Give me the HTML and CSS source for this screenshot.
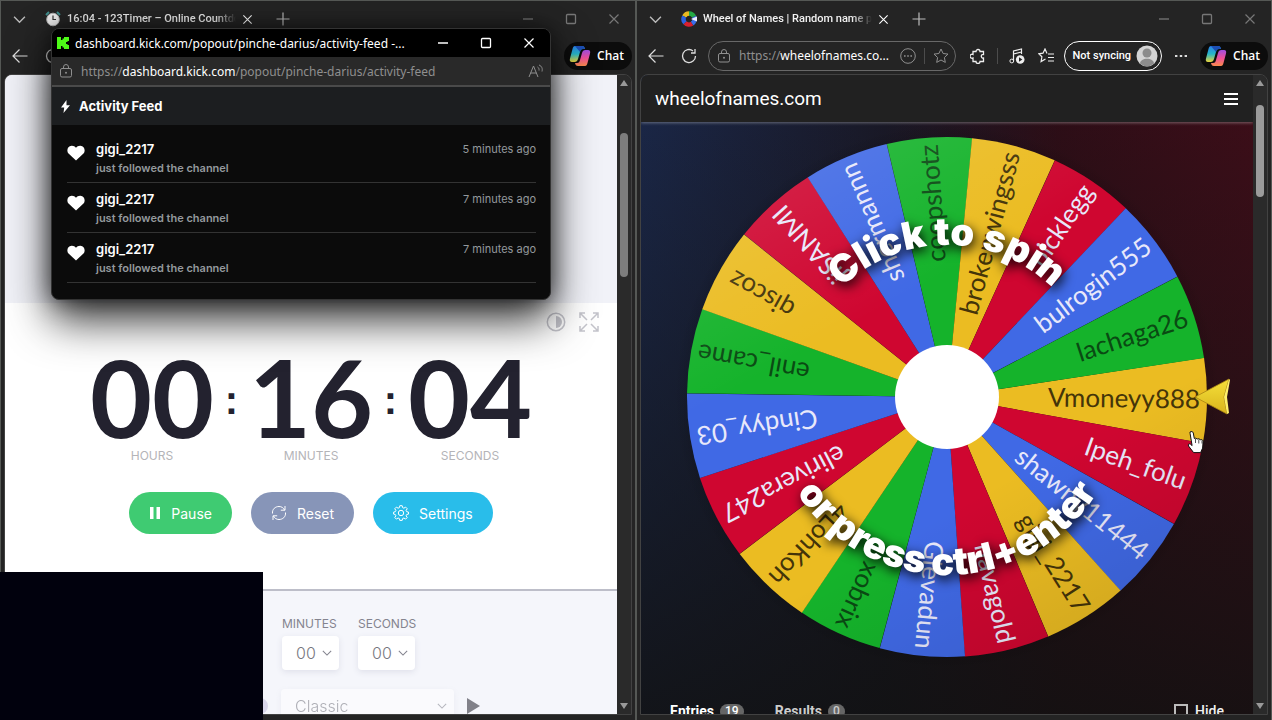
FILE: index.html
```html
<!DOCTYPE html>
<html lang="en">
<head>
<meta charset="utf-8">
<title>Desktop</title>
<link rel="stylesheet" href="styles.css">
</head>
<body>
<svg class="defs" width="0" height="0" aria-hidden="true">
  <defs>
    <linearGradient id="cpA" x1="0" y1="0" x2="0" y2="1"><stop offset="0" stop-color="#2a7fe8"/><stop offset=".5" stop-color="#27b6c8"/><stop offset="1" stop-color="#e8d43a"/></linearGradient>
    <linearGradient id="cpB" x1="0" y1="0" x2="0" y2="1"><stop offset="0" stop-color="#a04de0"/><stop offset=".5" stop-color="#ee4f9a"/><stop offset="1" stop-color="#f98a4b"/></linearGradient>
    <symbol id="copilot" viewBox="0 0 22 22"><path d="M6 1h7c2 0 2.500 1 3 3h-2c-2 0-2.500 1-3 3l-2 7c-.6 2-1.500 3-3.500 3H3c-2 0-2.600-1.500-2-3.500L3.500 4C4 2 4.600 1 6 1z" fill="url(#cpA)"/><path d="M16 21H9c-2 0-2.500-1-3-3h2c2 0 2.500-1 3-3l2-7c.6-2 1.500-3 3.500-3H19c2 0 2.600 1.500 2 3.500L18.500 18c-.5 2-1.100 3-2.500 3z" fill="url(#cpB)"/><path d="M6 1h7c2 0 2.500 1 3 3h-2c-2 0-2.500 1-3 3z" fill="#1c4fb4"/></symbol>
    <symbol id="chev" viewBox="0 0 12 12"><path d="M1 3.500 6 8.500l5-5" fill="none" stroke="currentColor" stroke-width="1.300"/></symbol>
    <symbol id="x" viewBox="0 0 12 12"><path d="M1.500 1.500l9 9m0-9l-9 9" stroke="currentColor" stroke-width="1.200"/></symbol>
    <symbol id="min" viewBox="0 0 12 12"><path d="M1 6h10" stroke="currentColor" stroke-width="1.300"/></symbol>
    <symbol id="max" viewBox="0 0 12 12"><rect x="1.500" y="1.500" width="9" height="9" rx="1" fill="none" stroke="currentColor" stroke-width="1.300"/></symbol>
    <symbol id="plus" viewBox="0 0 14 14"><path d="M7 .5v13M.5 7h13" stroke="currentColor" stroke-width="1.200"/></symbol>
    <symbol id="back" viewBox="0 0 16 16"><path d="M15.500 8H1M7.500 1.500 1 8l6.500 6.500" fill="none" stroke="currentColor" stroke-width="1.200"/></symbol>
    <symbol id="reload" viewBox="0 0 16 16"><path d="M14.500 8A6.500 6.500 0 1 1 12 2.900M14 1v4h-4" fill="none" stroke="currentColor" stroke-width="1.300"/></symbol>
    <symbol id="lock" viewBox="0 0 14 14"><rect x="1.500" y="4.500" width="11" height="8.500" rx="1.500" fill="none" stroke="currentColor"/><path d="M4.500 4.500V3a2.500 2.500 0 0 1 5 0v1.500" fill="none" stroke="currentColor"/><circle cx="7" cy="8.700" r="1" fill="currentColor"/></symbol>
    <symbol id="heart" viewBox="0 0 18 16"><path d="M9 15.500 1.500 8.500C-.8 6 .4 1 4.600.700 6.600.600 8 1.400 9 2.800c1-1.400 2.400-2.200 4.400-2.100C17.600 1 18.800 6 16.500 8.500z" fill="#fff"/></symbol>
    <symbol id="up" viewBox="0 0 8 6"><path d="M4 0 8 6H0z" fill="currentColor"/></symbol>
    <symbol id="down" viewBox="0 0 8 6"><path d="M4 6 8 0H0z" fill="currentColor"/></symbol>
  </defs>
</svg>

<main class="desktop">
  <section class="window" aria-label="123Timer">
    <header class="tabs">
      <button class="icon tabmenu" aria-label="Tab menu"><svg width="13" height="13"><use href="#chev"/></svg></button>
      <div class="tab">
        <svg width="16" height="16" viewBox="0 0 16 16"><path d="M1 4l3-3M15 4l-3-3" stroke="#3f8d8c" stroke-width="2"/><circle cx="8" cy="8.500" r="6.300" fill="#eee" stroke="#b5b5b5"/><path d="M8 4.500v4h3" fill="none" stroke="#333" stroke-width="1.200"/></svg>
        <span class="tabtitle">16:04 - 123Timer – Online Countdown</span>
        <button class="icon bright" aria-label="Close tab"><svg width="11" height="11"><use href="#x"/></svg></button>
      </div>
      <button class="icon" aria-label="New tab"><svg width="14" height="14"><use href="#plus"/></svg></button>
      <div class="controls">
        <button class="icon" aria-label="Minimize"><svg width="12" height="12"><use href="#min"/></svg></button>
        <button class="icon" aria-label="Maximize"><svg width="12" height="12"><use href="#max"/></svg></button>
        <button class="icon" aria-label="Close"><svg width="12" height="12"><use href="#x"/></svg></button>
      </div>
    </header>
    <div class="toolbar">
      <button class="icon" aria-label="Back"><svg width="16" height="16"><use href="#back"/></svg></button>
      <button class="icon" aria-label="Reload"><svg width="16" height="16"><use href="#reload"/></svg></button>
      <button class="chat"><svg width="22" height="22"><use href="#copilot"/></svg>Chat</button>
    </div>
    <div class="view">
      <div class="page timer">
        <div class="hero"></div>
        <div class="card">
          <div class="tools">
            <button class="icon" aria-label="Contrast"><svg width="20" height="20" viewBox="0 0 20 20"><circle cx="10" cy="10" r="8.700" fill="none" stroke="currentColor" stroke-width="1.500"/><path d="M10 4a6 6 0 0 1 0 12z" fill="currentColor"/></svg></button>
            <button class="icon" aria-label="Full screen"><svg width="20" height="20" viewBox="0 0 20 20" fill="none" stroke="currentColor" stroke-width="1.500"><path d="M1 6V1h5M14 1h5v5M19 14v5h-5M6 19H1v-5M1 1l7 7M19 1l-7 7M19 19l-7-7M1 19l7-7"/></svg></button>
          </div>
          <div class="clock">
            <div class="unit"><b>00</b><span>HOURS</span></div>
            <i>:</i>
            <div class="unit"><b>16</b><span>MINUTES</span></div>
            <i>:</i>
            <div class="unit"><b>04</b><span>SECONDS</span></div>
          </div>
          <div class="actions">
            <button class="pill pause"><svg width="12" height="12" viewBox="0 0 12 12"><path d="M1 0h3.500v12H1zM7.500 0H11v12H7.500z" fill="#fff"/></svg>Pause</button>
            <button class="pill reset"><svg width="16" height="16" viewBox="0 0 16 16" fill="none" stroke="#fff"><path d="M1.500 8.500C1 4 4.500 1.500 8 1.500c2.500 0 4.500 1.300 5.500 3.500M14 1v4.200h-4.200M14.500 7.500C15 12 11.500 14.500 8 14.500c-2.500 0-4.500-1.300-5.500-3.500M2 15v-4.200h4.200"/></svg>Reset</button>
            <button class="pill settings"><svg width="16" height="16" viewBox="0 0 16 16" fill="none" stroke="#fff"><circle cx="8" cy="8" r="2.700"/><path d="M6.800.700h2.400l.4 1.900 1.300.6 1.700-1.100 1.600 1.600-1.100 1.700.6 1.300 1.800.4v2l-1.800.4-.6 1.300 1.100 1.700-1.600 1.600-1.700-1.100-1.300.6-.4 1.800H6.800l-.4-1.800-1.300-.6-1.700 1.100-1.600-1.600 1.100-1.700-.6-1.300L.600 9.100v-2l1.700-.4.600-1.300-1.100-1.700 1.600-1.600 1.700 1.100 1.300-.6z"/></svg>Settings</button>
          </div>
        </div>
        <div class="options">
          <div class="fields">
            <label>MINUTES<span class="pick"><select><option>00</option></select><svg width="10" height="10"><use href="#chev"/></svg></span></label>
            <label>SECONDS<span class="pick"><select><option>00</option></select><svg width="10" height="10"><use href="#chev"/></svg></span></label>
          </div>
          <div class="sound">
            <span class="knob"></span>
            <span class="pick wide"><select aria-label="Sound"><option>Classic</option></select><svg width="10" height="10"><use href="#chev"/></svg></span>
            <button class="icon" aria-label="Play sound"><svg width="13" height="16" viewBox="0 0 13 16"><path d="M0 0v16l13-8z" fill="#818189"/></svg></button>
          </div>
        </div>
      </div>
      <div class="scroll mid"><svg width="8" height="6"><use href="#up"/></svg><span class="thumb"></span><svg class="end" width="8" height="6"><use href="#down"/></svg></div>
    </div>
  </section>

  <section class="window" aria-label="Wheel of Names">
    <header class="tabs">
      <button class="icon tabmenu" aria-label="Tab menu"><svg width="13" height="13"><use href="#chev"/></svg></button>
      <div class="tab">
        <svg width="16" height="16" viewBox="-8 -8 16 16" fill="none" stroke-width="4.500"><path d="M-4.800-2.500A5.500 5.500 0 0 1 0-5.500" stroke="#e8b923"/><path d="M0-5.500A5.500 5.500 0 0 1 5-2.300" stroke="#23a845"/><path d="M5-2.300A5.500 5.500 0 0 1 3 4.700" stroke="#3b6fe8"/><path d="M3 4.700A5.500 5.500 0 0 1-4 3.800" stroke="#d8202f"/><path d="M-4 3.800A5.500 5.500 0 0 1-4.800-2.500" stroke="#2b62e0"/><circle r="2.800" fill="#222" stroke="none"/><path d="M2 0l6-2.500v5z" fill="#eef" stroke="none"/></svg>
        <span class="tabtitle">Wheel of Names | Random name picker</span>
        <button class="icon bright" aria-label="Close tab"><svg width="11" height="11"><use href="#x"/></svg></button>
      </div>
      <button class="icon" aria-label="New tab"><svg width="14" height="14"><use href="#plus"/></svg></button>
      <div class="controls">
        <button class="icon" aria-label="Minimize"><svg width="12" height="12"><use href="#min"/></svg></button>
        <button class="icon" aria-label="Maximize"><svg width="12" height="12"><use href="#max"/></svg></button>
        <button class="icon" aria-label="Close"><svg width="12" height="12"><use href="#x"/></svg></button>
      </div>
    </header>
    <div class="toolbar">
      <button class="icon" aria-label="Back"><svg width="16" height="16"><use href="#back"/></svg></button>
      <button class="icon" aria-label="Reload"><svg width="16" height="16"><use href="#reload"/></svg></button>
      <div class="address">
        <svg width="14" height="14"><use href="#lock"/></svg>
        <span class="url">https://<em>wheelofnames.co...</em></span>
        <svg width="16" height="16" viewBox="0 0 16 16"><circle cx="8" cy="8" r="7.300" fill="none" stroke="currentColor"/><path d="M4 8h1.600M7.200 8h1.600M10.400 8H12" stroke="currentColor" stroke-width="1.600"/></svg>
        <span class="rule"></span>
        <svg width="16" height="16" viewBox="0 0 16 16"><path d="M8 1l2.100 4.500 4.900.6-3.600 3.400.9 4.900L8 12l-4.300 2.400.9-4.900L1 6.100l4.900-.6z" fill="none" stroke="currentColor"/></svg>
      </div>
      <div class="extras">
        <button class="icon" aria-label="Extensions"><svg width="16" height="16" viewBox="0 0 16 16"><path d="M3 3.500h3a2 2 0 1 1 4 0h3.500v3a1.800 1.800 0 1 0 0 3.500v3.500H10a2 2 0 0 1-4 0H3V10a2 2 0 1 1 0-3.500z" fill="none" stroke="currentColor" stroke-width="1.300"/></svg></button>
        <span class="rule"></span>
        <button class="icon" aria-label="Media"><svg width="16" height="16" viewBox="0 0 16 16"><path d="M4.500 13V3l8-2v5M4.500 6l8-2" fill="none" stroke="currentColor" stroke-width="1.200"/><circle cx="2.800" cy="13" r="1.900" fill="none" stroke="currentColor"/><circle cx="11.200" cy="11.500" r="4.300" fill="currentColor"/><path d="M10 9.300v4.400l3.400-2.200z" fill="#242424"/></svg></button>
        <button class="icon" aria-label="Favorites"><svg width="16" height="16" viewBox="0 0 16 16"><path d="M9 5.500 7 1 5 5.200l-4.200.6 3.100 3-.8 4.800L7.500 11M10 6h6M10 9.500h6M10 13h6" fill="none" stroke="currentColor" stroke-width="1.200"/></svg></button>
      </div>
      <button class="profile">Not syncing<svg width="22" height="22" viewBox="0 0 22 22"><circle cx="11" cy="11" r="10.500" fill="#d4d4d4"/><circle cx="11" cy="8" r="4.500" fill="#8c8c8c"/><path d="M4 18.500c0-6.500 14-6.500 14 0a10.500 10.500 0 0 1-14 0z" fill="#8c8c8c"/></svg></button>
      <button class="icon dots" aria-label="More"><svg width="12" height="4" viewBox="0 0 12 4"><path d="M0 2h2.400M4.800 2h2.400M9.600 2H12" stroke="currentColor" stroke-width="2"/></svg></button>
      <button class="chat"><svg width="22" height="22"><use href="#copilot"/></svg>Chat</button>
    </div>
    <div class="view">
      <div class="page names">
        <nav class="sitebar"><a href="#">wheelofnames.com</a><button class="icon" aria-label="Menu"><svg width="14" height="12" viewBox="0 0 14 12"><path d="M0 1h14M0 6h14M0 11h14" stroke="#fff" stroke-width="2"/></svg></button></nav>
        <svg class="wheel" viewBox="0 0 612 560" role="img" aria-label="Wheel with 19 names">
          <defs>
            <path id="s" d="M0 0 256.450-42.790A260 260 0 0 1 256.450 42.790z"/>
            <path id="arcTop" d="M-152 0A152 152 0 0 1 152 0"/>
            <path id="arcBottom" d="M-178 0A178 178 0 0 0 178 0"/>
            <radialGradient id="dark"><stop offset=".75" stop-color="#000" stop-opacity=".5"/><stop offset="1" stop-color="#000" stop-opacity="0"/></radialGradient>
            <linearGradient id="gloss" x1=".15" y1="0" x2=".7" y2="1"><stop offset="0" stop-color="#fff" stop-opacity=".13"/><stop offset=".35" stop-color="#fff" stop-opacity="0"/><stop offset=".7" stop-color="#000" stop-opacity="0"/><stop offset="1" stop-color="#000" stop-opacity=".1"/></linearGradient>
            <linearGradient id="gold" x1="0" y1="0" x2="0" y2="1"><stop offset="0" stop-color="#f5e03a"/><stop offset="1" stop-color="#d9b41c"/></linearGradient>
          </defs>
          <g transform="translate(306 275)">
            <circle r="272" fill="url(#dark)"/>
            <g class="slices">
              <g class="y" transform="rotate(.8)"><use href="#s"/><text x="253" y="8">Vmoneyy888</text></g>
              <g class="r" transform="rotate(19.700)"><use href="#s"/><text x="253" y="8">Ipeh_folu</text></g>
              <g class="b" transform="rotate(38.700)"><use href="#s"/><text x="253" y="8">shawny11444</text></g>
              <g class="y" transform="rotate(57.600)"><use href="#s"/><text x="253" y="8">gigi_2217</text></g>
              <g class="r" transform="rotate(76.600)"><use href="#s"/><text x="253" y="8">navagold</text></g>
              <g class="b" transform="rotate(95.500)"><use href="#s"/><text x="253" y="8">Glevadun</text></g>
              <g class="g" transform="rotate(114.500)"><use href="#s"/><text x="253" y="8">xobrix</text></g>
              <g class="y" transform="rotate(133.400)"><use href="#s"/><text x="253" y="8">4LohKoh</text></g>
              <g class="r" transform="rotate(152.400)"><use href="#s"/><text x="253" y="8">elirivera247</text></g>
              <g class="b" transform="rotate(171.300)"><use href="#s"/><text x="253" y="8">Cindyy_03</text></g>
              <g class="g" transform="rotate(190.300)"><use href="#s"/><text x="253" y="8">enil_came</text></g>
              <g class="y" transform="rotate(209.200)"><use href="#s"/><text x="247" y="8">qiscoz</text></g>
              <g class="r" transform="rotate(228.200)"><use href="#s"/><text x="253" y="8">jiSANMI</text></g>
              <g class="b" transform="rotate(247.100)"><use href="#s"/><text x="253" y="8">shermannn</text></g>
              <g class="g" transform="rotate(266.100)"><use href="#s"/><text x="253" y="8">coopshotz</text></g>
              <g class="y" transform="rotate(285)"><use href="#s"/><text x="253" y="8">brokenwingsss</text></g>
              <g class="r" transform="rotate(304)"><use href="#s"/><text x="253" y="8">picklegg</text></g>
              <g class="b" transform="rotate(322.900)"><use href="#s"/><text x="253" y="8">bulrogin555</text></g>
              <g class="g" transform="rotate(341.900)"><use href="#s"/><text x="253" y="8">lachaga26</text></g>
            </g>
            <circle r="260" fill="url(#gloss)"/>
            <circle r="52" fill="#fff"/>
            <text class="arc"><textPath href="#arcTop" startOffset="50%">Click to spin</textPath></text>
            <text class="arc"><textPath href="#arcBottom" startOffset="50%">or press ctrl+enter</textPath></text>
            <path d="M248 0 282-18 277 0 280 17z" fill="url(#gold)" stroke="#a98412" stroke-width=".8"/><path d="M282-18 277 0l3 17 2-1-2-16 3-17z" fill="#fff06a"/>
            <path d="M243 35c1.500-1 3-.3 3.300 1l1 5.500 1.300-.3 1.700.8 1.500-.3 1.500 1 1.500-.1c1 .5 1.500 1.200 1.300 2.500l-.5 6-2 4.500h-7l-5-6.500c-1-1.800.6-2.800 2-1.800l1.500 1.300-2-12z" fill="#fff" stroke="#111"/><path d="M248.500 42v4M251.800 42.500v4M255 43.500v3" stroke="#222" stroke-width=".8"/>
          </g>
        </svg>
        <div class="lists">
          <button class="list on">Entries <span>19</span></button>
          <button class="list">Results <span>0</span></button>
          <label class="hide"><input type="checkbox">Hide</label>
        </div>
      </div>
      <div class="scroll top"><svg width="8" height="6"><use href="#up"/></svg><span class="thumb"></span><svg class="end" width="8" height="6"><use href="#down"/></svg></div>
    </div>
  </section>

  <section class="popup" aria-label="Activity feed">
    <header class="poptitle">
      <svg width="12" height="12" viewBox="0 0 12 12"><path d="M0 0h4v3h1.500V1.500H7V0h5v4h-1.500v1H9v2h1.500v1H12v4H7v-1.500H5.500V9H4v3H0z" fill="#4dfb17"/></svg>
      <span>dashboard.kick.com/popout/pinche-darius/activity-feed -...</span>
      <button class="icon" aria-label="Minimize"><svg width="12" height="12"><use href="#min"/></svg></button>
      <button class="icon" aria-label="Maximize"><svg width="12" height="12"><use href="#max"/></svg></button>
      <button class="icon" aria-label="Close"><svg width="12" height="12"><use href="#x"/></svg></button>
    </header>
    <div class="popurl"><svg width="14" height="14"><use href="#lock"/></svg><span class="url">https://<em>dashboard.kick.com</em>/popout/pinche-darius/activity-feed</span><svg width="16" height="14" viewBox="0 0 16 14" fill="none" stroke="currentColor"><path d="M1 13 5.500 2 10 13M2.600 9h5.800M9.500 3c1.500.8 1.700 2.300 1.500 3.500M11 1c3 1.200 3.700 3.700 3 6.500"/></svg></div>
    <h1><svg width="9" height="13" viewBox="0 0 9 13"><path d="M5.500 0 0 7.500h3.200L2.500 13 9 5.200H5.500z" fill="#fff"/></svg>Activity Feed</h1>
    <ul class="feed">
      <li><svg width="18" height="16"><use href="#heart"/></svg><div><strong>gigi_2217</strong><p>just followed the channel</p></div><time>5 minutes ago</time></li>
      <li><svg width="18" height="16"><use href="#heart"/></svg><div><strong>gigi_2217</strong><p>just followed the channel</p></div><time>7 minutes ago</time></li>
      <li><svg width="18" height="16"><use href="#heart"/></svg><div><strong>gigi_2217</strong><p>just followed the channel</p></div><time>7 minutes ago</time></li>
    </ul>
  </section>
  <div class="facecam"></div>
</main>
</body>
</html>
```
FILE: styles.css
```css
* { box-sizing: border-box; }
body { margin: 0; background: #191a1a; font-family: "Noto Sans", "Open Sans", sans-serif; font-size: 12px; color: #f0f0f0; }
button { font: inherit; color: inherit; background: none; border: 0; padding: 0; }
svg { display: block; flex: none; }
.defs { position: absolute; }
.desktop { position: relative; height: 100vh; display: grid; grid-template-columns: 1fr 1fr; overflow: hidden; }
.window { display: flex; flex-direction: column; min-width: 0; min-height: 0; background: #242424; border: 1px solid #555855; border-width: 1px 1px 0; padding: 0 3px 5px; }
.icon { display: grid; place-items: center; flex: none; }
.bright { color: #fff; }

.tabs { display: flex; align-items: center; height: 36px; padding: 0 8px; color: #bbb; }
.tab { display: flex; align-items: center; gap: 6px; width: 208px; margin: 0 23px 0 18px; color: #f2f2f2; }
.tabmenu { width: 15px; }
.tabtitle { flex: 1; overflow: hidden; white-space: nowrap; font: 500 11px/20px Roboto, sans-serif; -webkit-mask-image: linear-gradient(to right, #000 88%, transparent); mask-image: linear-gradient(to right, #000 88%, transparent); }
.controls { display: flex; gap: 31px; margin-left: auto; padding-right: 4px; color: #777; }
.toolbar { display: flex; align-items: center; height: 37px; padding-left: 8px; gap: 17px; color: #ddd; }
.chat { display: flex; align-items: center; gap: 6px; height: 28px; padding: 0 8px 0 5px; margin: 0 0 0 auto; border-radius: 14px; background: #0c0c0c; color: #fff; font: 600 12px "Open Sans", sans-serif; }
.address { flex: 1; min-width: 0; display: flex; align-items: center; height: 30px; margin-left: -6px; padding: 0 6px 0 8px; gap: 8px; border: 1px solid #686868; border-radius: 15px; color: #909090; }
.url { flex: 1; overflow: hidden; white-space: nowrap; font-size: 12px; color: #8f8f8f; }
.url em { font-style: normal; color: #fff; }
.rule { width: 1px; height: 16px; background: #4c4c4c; }
.extras { display: flex; align-items: center; gap: 13px; }
.address + .extras { margin-left: -3px; }
.extras .icon { color: #eee; }
.extras .rule { margin: 0 -2px; }
.profile { display: flex; align-items: center; gap: 5px; height: 30px; padding: 0 3px 0 8px; margin: 0 -4px 0 -7px; border: 1px solid #fff; border-radius: 15px; color: #fff; font: 500 11px Roboto, sans-serif; white-space: nowrap; }
.dots { margin-right: -4px; }

.view { flex: 1; min-height: 0; display: flex; border: 1px solid #424242; border-radius: 8px 8px 0 0; overflow: hidden; }
.page { flex: 1; min-width: 0; display: flex; flex-direction: column; overflow: hidden; }
.scroll { width: 14px; display: flex; flex-direction: column; align-items: center; padding: 5px 0; color: #999; background: #2a2a2a; }
.scroll .end { margin-top: auto; }
.thumb { width: 8px; border-radius: 4px; background: #9b9b9b; }
.mid .thumb { height: 144px; margin-top: 47px; background: #7d7d7d; }
.top .thumb { height: 92px; margin-top: 19px; }

.timer { background: #f5f6fb; color: #84848f; font-family: Inter, sans-serif; }
.timer > * { flex: none; }
.hero { height: 228px; background: #f1f2f8; }
.card { height: 288px; background: #fff; border-bottom: 2px solid #bdbec9; padding-top: 9px; }
.tools { display: flex; justify-content: flex-end; gap: 13px; padding-right: 18px; color: #c4c4cb; }
.clock { display: flex; justify-content: center; margin-top: 20px; }
.unit { width: 125px; display: flex; flex-direction: column; align-items: center; }
.unit b { font: 700 107px/90px Lato, sans-serif; color: #23222f; }
.unit span { font-size: 12px; line-height: 16px; margin-top: 6px; color: #b4b4b8; }
.clock i { width: 34px; text-align: center; font: 700 40px/96px "Liberation Sans", Arial, sans-serif; color: #23222f; }
.actions { display: flex; justify-content: center; gap: 19px; margin-top: 28px; }
.pill { display: flex; align-items: center; gap: 10px; height: 42px; padding: 0 20px; border-radius: 21px; color: #fff; font-size: 14px; }
.pause { background: #3fcb72; }
.reset { background: #8795b8; }
.settings { background: #29bdea; }
.options { padding: 25px 0 0 277px; }
.fields { display: flex; gap: 19px; }
.fields label { width: 57px; font-size: 12px; line-height: 16px; }
.pick { display: flex; align-items: center; width: 57px; height: 34px; margin-top: 4px; padding: 0 7px 0 14px; border-radius: 4px; background: #fff; box-shadow: 0 2px 6px #dfe0ea; }
.pick select { flex: 1; min-width: 0; appearance: none; border: 0; padding: 0; background: none; color: #777780; font: 300 16px Inter, sans-serif; }
.sound { display: flex; align-items: center; gap: 13px; margin: 19px 0 0 -30px; }
.sound .pick { margin: 0; width: 173px; }
.wide { opacity: .55; }
.knob { width: 16px; height: 16px; border-radius: 8px; background: #d9d6ea; }

.names { font-family: Roboto, sans-serif; background: linear-gradient(to bottom, #11111122, #111111dd), linear-gradient(to right, #1c2b52, #1b1a2b 40%, #330d18 68%, #450d1a); }
.names > * { flex: none; }
.sitebar { display: flex; align-items: center; justify-content: space-between; height: 47px; padding: 0 15px 0 14px; background: #212121; box-shadow: 0 1px 3px #ffffff55; }
.sitebar a { font-size: 19px; color: #fff; text-decoration: none; }
.wheel { width: 100%; height: auto; }
.slices text { font: 400 26px Lato, sans-serif; text-anchor: end; }
.y { fill: #ebbc22; } .r { fill: #cf0630; } .b { fill: #4069e5; } .g { fill: #15b32b; }
.y text { fill: #443409; } .g text { fill: #0a4a13; } .r text, .b text { fill: #e8e8fa; }
.arc { font: 900 38px Inter, sans-serif; text-anchor: middle; fill: #fff; filter: drop-shadow(2px 4px 6px #000); }
.lists { display: flex; padding: 19px 29px 0; gap: 31px; align-items: center; }
.list { font-size: 14px; font-weight: 700; line-height: 20px; display: flex; align-items: center; gap: 6px; color: #ccc; }
.list.on { color: #fff; }
.list span { padding: 0 5px; border-radius: 8px; background: #666; font-size: 12px; line-height: 15px; font-weight: 500; }
.hide { display: flex; align-items: center; gap: 7px; margin-left: auto; font-size: 14px; font-weight: 500; }
.hide input { appearance: none; width: 14px; height: 14px; margin: 0; border: 2px solid #bbb; }

.popup { position: absolute; left: 51px; top: 28px; width: 500px; height: 272px; border: 1px solid #333; border-radius: 8px; background: #0b0b0b; overflow: hidden; box-shadow: 0 20px 44px #000000cc, 0 0 22px #00000088; font-family: Inter, sans-serif; }
.poptitle { display: flex; align-items: center; height: 28px; padding: 0 15px 0 5px; gap: 31px; background: #000; color: #fff; font: 12px "Noto Sans", sans-serif; }
.poptitle span { flex: 1; margin-left: -25px; white-space: nowrap; overflow: hidden; }
.popurl { display: flex; align-items: center; gap: 8px; height: 30px; padding: 0 6px 0 7px; background: #292929; border-bottom: 2px solid #4a4a4a; color: #8f8f8f; font-family: "Noto Sans", sans-serif; }
.popup h1 { display: flex; align-items: center; gap: 9px; height: 38px; margin: 0; padding: 0 9px; background: #1c1e20; color: #fff; font-size: 13px; font-weight: 700; }
.feed { list-style: none; margin: 0; padding: 8px 14px 0 15px; }
.feed li { display: flex; gap: 11px; height: 50px; padding-top: 6px; border-bottom: 1px solid #333; }
.feed svg { margin-top: 6px; }
.feed div { flex: 1; }
.feed strong { display: block; font-size: 13px; line-height: 20px; font-weight: 600; color: #fff; }
.feed p { margin: 0; font-size: 11px; line-height: 18px; font-weight: 600; color: #94999d; }
.feed time { font-size: 11px; line-height: 20px; color: #94999d; }
.facecam { position: absolute; left: 0; bottom: 0; width: 263px; height: 148px; background: #01010d; }
```
